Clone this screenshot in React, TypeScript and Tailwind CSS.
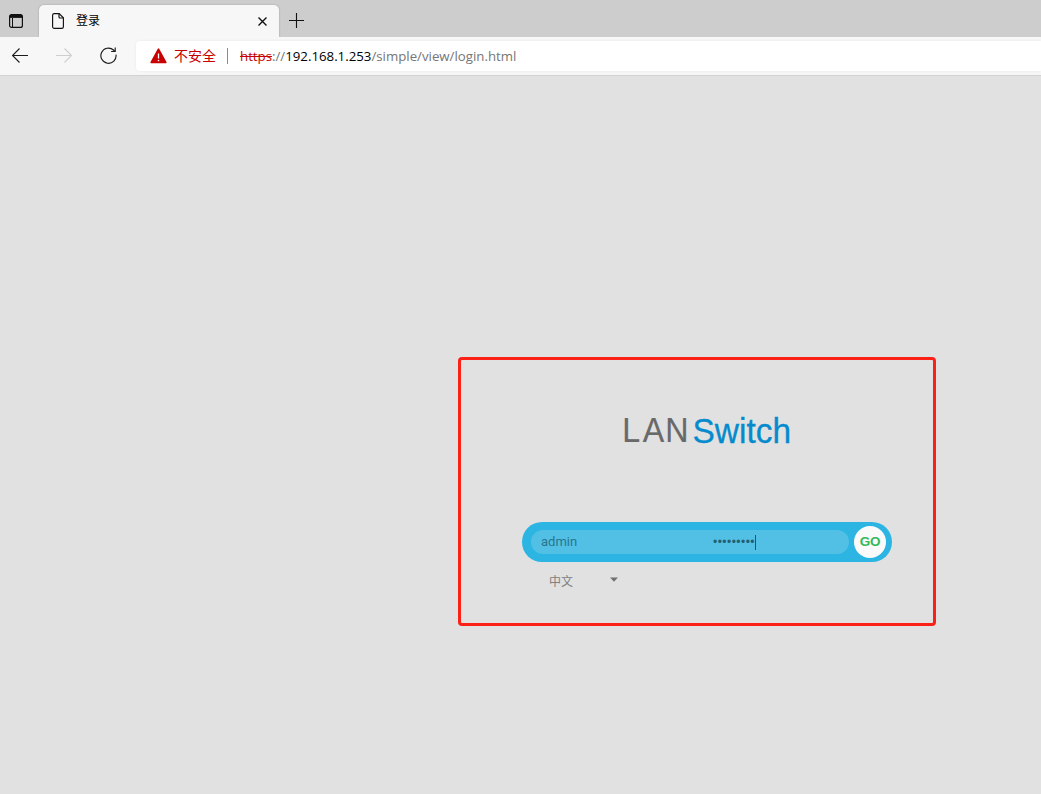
const URL_PARTS = {
  scheme: "https",
  host: "192.168.1.253",
  path: "/simple/view/login.html",
};

function TabActionsIcon() {
  return (
    <svg width="14" height="14" viewBox="0 0 14 14" fill="none" stroke="#111">
      <rect x="0.6" y="0.6" width="12.8" height="12.8" rx="2" strokeWidth="1.2" />
      <path d="M1 2.4h12" strokeWidth="3" />
      <path d="M3.5 4v9" strokeWidth="1" />
    </svg>
  );
}

function PageIcon() {
  return (
    <svg width="12" height="16" viewBox="0 0 12 16" fill="none" stroke="#111" strokeWidth="1.15">
      <path d="M2.3.6h4.9l4.2 4.2v8.9a1.7 1.7 0 0 1-1.7 1.7H2.3A1.7 1.7 0 0 1 .6 13.7V2.3A1.7 1.7 0 0 1 2.3.6Z" />
      <path d="M7 .8V4a1 1 0 0 0 1 1h3.3" />
    </svg>
  );
}

function ArrowIcon({ className }: { className?: string }) {
  return (
    <svg width="16" height="15" viewBox="0 0 16 15" fill="none" stroke="currentColor" strokeWidth="1.1" className={className}>
      <path d="M16 7.5H.8M7.5.5l-7 7 7 7" />
    </svg>
  );
}

function ReloadIcon() {
  return (
    <svg width="17" height="17" viewBox="0 0 17 17" fill="none" stroke="#1b1b1b" strokeWidth="1.15">
      <path d="M16 7.6a7.6 7.6 0 1 1-2.5-4.6L15 4.5" />
      <path d="M15.2.4v4.1h-4.1" />
    </svg>
  );
}

function WarningIcon() {
  return (
    <svg width="17" height="16" viewBox="0 0 17 16">
      <path
        d="M8.5 1.2 15.8 14.5H1.2Z"
        fill="#c80000"
        stroke="#c80000"
        strokeWidth="1.6"
        strokeLinejoin="round"
      />
      <path d="M8.5 5.5v5" stroke="#fff" strokeWidth="1.3" />
      <circle cx="8.5" cy="12.5" r="0.85" fill="#fff" />
    </svg>
  );
}

function TabStrip() {
  return (
    <div className="flex h-[37px] items-end bg-[#cdcdcd]">
      <div className="flex h-[37px] w-[39px] items-center pt-[5px] pl-[9px]">
        <TabActionsIcon />
      </div>
      <div className="flex h-8 w-60 items-center rounded-t-[5px] bg-[#f7f7f7] pl-[13px] shadow-[0_0_2px_rgba(0,0,0,0.25)]">
        <PageIcon />
        <span className="mb-[2px] ml-3 text-[12px] leading-4 text-black">登录</span>
        <svg width="9" height="9" viewBox="0 0 9 9" stroke="#111" strokeWidth="1.4" className="mr-[12px] ml-auto">
          <path d="M.5.5l8 8M8.5.5l-8 8" />
        </svg>
      </div>
      <div className="flex h-[37px] items-center pt-[4px] pl-[10px]">
        <svg width="15" height="15" viewBox="0 0 15 15" stroke="#111" strokeWidth="1.1">
          <path d="M7.5 0v15M0 7.5h15" />
        </svg>
      </div>
    </div>
  );
}

function Toolbar() {
  return (
    <div className="relative flex h-[39px] items-center border-b border-[#d2d2d2] bg-[#f7f7f7]">
      <ArrowIcon className="mb-px ml-3 text-[#1b1b1b]" />
      <ArrowIcon className="mb-px ml-7 rotate-180 text-[#cfcfcf]" />
      <div className="mb-px ml-[27.5px]">
        <ReloadIcon />
      </div>
      <div className="ml-[19.5px] flex h-[30px] flex-1 items-center rounded-l bg-white pl-[13.5px] shadow-[0_0_3px_rgba(0,0,0,0.06)]">
        <WarningIcon />
        <span className="mb-[2px] ml-[7.5px] w-[42px] text-[14px] leading-5 whitespace-nowrap text-[#c80000]">
          不安全
        </span>
        <span className="ml-[11px] h-4 w-px bg-[#8c8c8c]" />
        <span className="ml-[12px] font-['Open_Sans','Noto_Sans',sans-serif] text-[13.25px] leading-5 whitespace-nowrap text-[#767676]">
          <span className="text-[#c80000] line-through">{URL_PARTS.scheme}</span>
          ://
          <span className="text-black">{URL_PARTS.host}</span>
          {URL_PARTS.path}
        </span>
      </div>
    </div>
  );
}

function Logo() {
  return (
    <svg width="180" height="50" viewBox="0 0 180 50" className="font-['Liberation_Sans',Arial,sans-serif]">
      <text x="5.8 27.9 52.4" y="36.5" fontSize="35" fill="#696969" stroke="#696969" strokeWidth="0.2" transform="scale(0.92 1)">
        LAN
      </text>
      <text
        x="75.5"
        y="36.5"
        fontSize="34.5"
        textLength="98.5"
        lengthAdjust="spacingAndGlyphs"
        fill="#058bcd"
        stroke="#058bcd"
        strokeWidth="0.3"
      >
        Switch
      </text>
    </svg>
  );
}

function LoginForm() {
  return (
    <div className="flex h-10 w-[370px] items-center rounded-full bg-[#2cb5e3] pl-[9px]">
      <div className="flex h-6 w-[318px] items-center rounded-full bg-[#52c0e5] pl-[10px] text-[#27758d]">
        <span className="w-[172px] font-[Roboto,sans-serif] text-[13px] leading-4">admin</span>
        <span className="mb-px font-['Liberation_Sans',Arial,sans-serif] text-[12px] leading-4 tracking-[0.47px] text-[#245f73]">
          •••••••••
        </span>
        <span className="h-[15px] w-px bg-[#1d5568]" />
      </div>
      <button className="ml-[5px] flex size-8 items-center justify-center rounded-full bg-[#fafafa] pt-px font-['Liberation_Sans',Arial,sans-serif] text-[13.5px] font-bold tracking-[-0.3px] text-[#35b95b]">
        GO
      </button>
    </div>
  );
}

function LanguageSelect() {
  return (
    <div className="mt-[11px] ml-[27px] flex h-4 items-center text-[#808080]">
      <span className="w-[60.5px] text-[12px] leading-4">中文</span>
      <svg width="8" height="5" viewBox="0 0 8 5" className="mb-[4px]" fill="#707070">
        <path d="M0 .5h8l-4 4.2Z" />
      </svg>
    </div>
  );
}

export default function App() {
  return (
    <div className="flex h-[794px] w-[1041px] flex-col overflow-hidden bg-[#e1e1e1] font-['Noto_Sans_CJK_SC',sans-serif]">
      <TabStrip />
      <Toolbar />
      <main className="flex-1 pt-[281px] pl-[458px]">
        <div className="h-[269px] w-[478px] rounded-[4px] border-3 border-[#fc2117] pl-[61px]">
          <div className="mt-[46px] ml-[95px] h-[50px]">
            <Logo />
          </div>
          <div className="mt-[66px]">
            <LoginForm />
          </div>
          <LanguageSelect />
        </div>
      </main>
    </div>
  );
}
